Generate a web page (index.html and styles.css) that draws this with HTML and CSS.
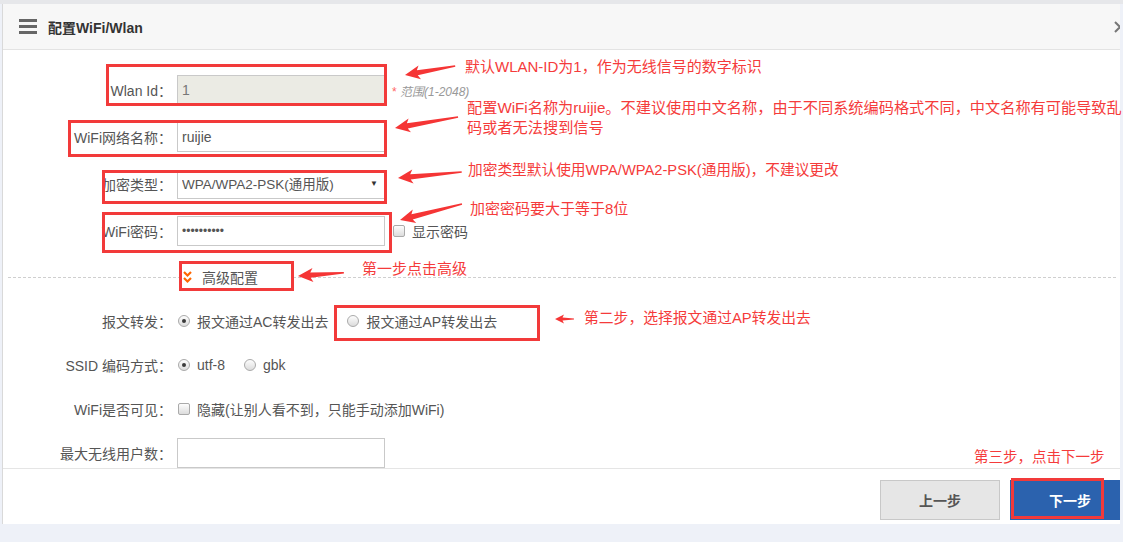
FILE: index.html
```html
<!DOCTYPE html>
<html lang="zh-CN">
<head>
    <meta charset="UTF-8">
    <meta name="viewport" content="width=device-width, initial-scale=1.0">
    <title>配置WiFi/Wlan</title>
    <link rel="stylesheet" href="styles.css">
</head>
<body>

<div class="dialog">
    <div class="dialog-head">
        <svg class="menu-icon" width="18" height="15" viewBox="0 0 18 15">
            <rect x="0" y="0" width="18" height="3" fill="#666"/>
            <rect x="0" y="6" width="18" height="3" fill="#666"/>
            <rect x="0" y="12" width="18" height="3" fill="#666"/>
        </svg>
        <span class="dialog-title">配置WiFi/Wlan</span>
        <svg class="close-icon" width="12" height="12" viewBox="0 0 12 12">
            <path d="M1 1 L11 11 M11 1 L1 11" stroke="#777" stroke-width="2" fill="none"/>
        </svg>
    </div>

    <div class="dialog-body">
        <div class="form-row">
            <label class="form-label">Wlan Id：</label>
            <input class="text-input" type="text" value="1" disabled>
            <span class="hint"><span class="req">*</span> 范围(1-2048)</span>
        </div>

        <div class="form-row">
            <label class="form-label">WiFi网络名称：</label>
            <input class="text-input" type="text" value="ruijie">
        </div>

        <div class="form-row">
            <label class="form-label">加密类型：</label>
            <div class="select-box">
                <select class="select-input">
                    <option>WPA/WPA2-PSK(通用版)</option>
                </select>
            </div>
        </div>

        <div class="form-row row-pwd">
            <label class="form-label">WiFi密码：</label>
            <input class="text-input pwd-input" type="password" value="ruijie1234">
            <span class="check show-pwd"></span>
            <span class="choice-text">显示密码</span>
        </div>

        <div class="adv-row">
            <div class="adv-toggle">
                <svg class="chevrons" width="9" height="13" viewBox="0 0 9 13">
                    <path d="M1 1 L4.5 4.5 L8 1 M1 7 L4.5 10.5 L8 7" stroke="#f60" stroke-width="2.2" fill="none"/>
                </svg>
                <span>高级配置</span>
            </div>
        </div>

        <div class="form-row row-radio">
            <label class="form-label">报文转发：</label>
            <span class="radio on"></span>
            <span class="choice-text">报文通过AC转发出去</span>
            <span class="radio"></span>
            <span class="choice-text">报文通过AP转发出去</span>
        </div>

        <div class="form-row row-radio">
            <label class="form-label">SSID 编码方式：</label>
            <span class="radio on"></span>
            <span class="choice-text">utf-8</span>
            <span class="radio"></span>
            <span class="choice-text">gbk</span>
        </div>

        <div class="form-row row-radio">
            <label class="form-label">WiFi是否可见：</label>
            <span class="check"></span>
            <span class="choice-text">隐藏(让别人看不到，只能手动添加WiFi)</span>
        </div>

        <div class="form-row">
            <label class="form-label">最大无线用户数：</label>
            <input class="text-input" type="text" value="">
        </div>
    </div>

    <div class="dialog-foot">
        <button class="btn btn-prev">上一步</button>
        <button class="btn btn-next">下一步</button>
    </div>
</div>

<!-- annotations drawn over the screenshot -->
<div class="notes">
    <div class="mark" style="left:106px;top:64px;width:281px;height:42px"></div>
    <div class="mark" style="left:68px;top:120px;width:319px;height:37px"></div>
    <div class="mark" style="left:102px;top:170px;width:285px;height:34px"></div>
    <div class="mark" style="left:102px;top:212px;width:290px;height:41px"></div>
    <div class="mark" style="left:179px;top:261px;width:115px;height:30px"></div>
    <div class="mark" style="left:334px;top:305px;width:206px;height:36px"></div>
    <div class="mark" style="left:1011px;top:478px;width:93px;height:41px"></div>

    <svg class="arrows" width="1123" height="542" viewBox="0 0 1123 542">
        <polygon transform="translate(405 75) rotate(-10.2)" points="0,0 15,-7 12.5,-2.6 51,-0.8 51,0.8 12.5,2.6 15,7"/>
        <polygon transform="translate(395 128) rotate(-9.9)" points="0,0 15,-7 12.5,-2.6 64,-0.8 64,0.8 12.5,2.6 15,7"/>
        <polygon transform="translate(398 178) rotate(-5.4)" points="0,0 15,-7 12.5,-2.6 64,-0.8 64,0.8 12.5,2.6 15,7"/>
        <polygon transform="translate(400 220) rotate(-14.5)" points="0,0 15,-7 12.5,-2.6 64,-0.8 64,0.8 12.5,2.6 15,7"/>
        <polygon transform="translate(298 276) rotate(-4)" points="0,0 15,-7 12.5,-2.6 46,-0.8 46,0.8 12.5,2.6 15,7"/>
        <polygon transform="translate(555 319)" points="0,0 9,-4.5 7.5,-1.5 19,-0.6 19,0.6 7.5,1.5 9,4.5"/>
    </svg>

    <div class="note note-1">默认WLAN-ID为1，作为无线信号的数字标识</div>
    <div class="note note-2">配置WiFi名称为ruijie。不建议使用中文名称，由于不同系统编码格式不同，中文名称有可能导致乱<br>码或者无法搜到信号</div>
    <div class="note note-3">加密类型默认使用WPA/WPA2-PSK(通用版)，不建议更改</div>
    <div class="note note-4">加密密码要大于等于8位</div>
    <div class="note note-5">第一步点击高级</div>
    <div class="note note-6">第二步，选择报文通过AP转发出去</div>
    <div class="note note-7">第三步，点击下一步</div>
</div>

</body>
</html>
```

FILE: styles.css
```css
body {
    font-family: 'Liberation Sans', 'Noto Sans CJK SC', sans-serif;
    font-size: 14px;
    color: #555;
    background-color: #eef1f8;
    margin: 0;
    padding: 0 0 0 2px;
    border-top: 4px solid #e6e7ea;
    height: 538px;
    overflow: hidden;
    position: relative;
}

/* Dialog frame */
.dialog {
    width: 1117px;
    height: 520px;
    background-color: #fff;
    border-left: 1px solid #d9d9d9;
    display: flex;
    flex-direction: column;
    overflow: hidden;
}

.dialog-head {
    flex: none;
    height: 45px;
    background-color: #f7f7f7;
    border-bottom: 1px solid #e3e3e3;
    display: flex;
    align-items: center;
    padding-left: 16px;
}

.menu-icon {
    flex: none;
    margin-right: 11px;
}

.dialog-title {
    font-weight: bold;
    color: #333;
    font-size: 14px;
}

.close-icon {
    flex: none;
    margin-left: auto;
    margin-right: -6px;
}

/* Scrolling form area */
.dialog-body {
    flex: none;
    height: 418px;
    box-sizing: border-box;
    padding: 25px 0 133px;
    overflow-y: scroll;
}

.dialog-body::-webkit-scrollbar {
    width: 6px;
}

.dialog-body::-webkit-scrollbar-track {
    background-color: #f2f2f2;
}

.dialog-body::-webkit-scrollbar-thumb {
    background-color: #c6c6c6;
}

.dialog-body::-webkit-scrollbar-button:vertical:start:decrement,
.dialog-body::-webkit-scrollbar-button:vertical:end:increment {
    display: block;
    height: 9px;
    background-color: #f2f2f2;
}

.form-row {
    height: 30px;
    display: flex;
    align-items: center;
    margin-bottom: 17px;
}

.row-pwd {
    margin-bottom: 16px;
}

.row-radio {
    margin-bottom: 14px;
}

.form-label {
    flex: none;
    width: 169px;
    margin-right: 5px;
    text-align: right;
    white-space: nowrap;
}

.text-input {
    flex: none;
    width: 208px;
    height: 30px;
    box-sizing: border-box;
    border: 1px solid #c9c9c9;
    padding: 0 4px;
    font-family: inherit;
    font-size: 14px;
    color: #555;
    background-color: #fff;
    outline: none;
}

.text-input:disabled {
    background-color: #ebebe4;
    color: #777;
}

.pwd-input {
    font-size: 12px;
    letter-spacing: 0;
}

.hint {
    margin-left: 7px;
    font-size: 12px;
    font-style: italic;
    color: #999;
    white-space: nowrap;
}

.hint .req {
    color: #f66;
    font-style: normal;
}

.select-box {
    position: relative;
    flex: none;
    width: 208px;
    height: 29px;
}

.select-input {
    appearance: none;
    -webkit-appearance: none;
    width: 100%;
    height: 100%;
    border: 1px solid #c9c9c9;
    border-radius: 0;
    padding: 0 4px;
    font-family: inherit;
    font-size: 13.5px;
    color: #555;
    background-color: #fff;
    outline: none;
}

.select-box::after {
    content: '▼';
    position: absolute;
    right: 7px;
    top: 9px;
    font-size: 8px;
    color: #333;
}

/* Radios and checkboxes */
.radio, .check {
    flex: none;
    width: 12px;
    height: 12px;
    box-sizing: border-box;
    border: 1px solid #aaa;
    background: linear-gradient(#fdfdfd, #dcdcdc);
    margin-left: 1px;
    margin-right: 7px;
    position: relative;
}

.radio {
    border-radius: 50%;
}

.check {
    border-radius: 2px;
}

.radio.on::after {
    content: '';
    position: absolute;
    left: 3px;
    top: 3px;
    width: 4px;
    height: 4px;
    border-radius: 50%;
    background-color: #3a3a3a;
}

.choice-text {
    margin-right: 18px;
    white-space: nowrap;
}

.show-pwd {
    margin-left: 8px;
}

/* Advanced toggle with dashed rule */
.adv-row {
    position: relative;
    height: 30px;
    display: flex;
    align-items: center;
    padding-left: 177px;
    margin-bottom: 14px;
}

.adv-row::before {
    content: '';
    position: absolute;
    left: 5px;
    right: 4px;
    top: 15px;
    border-top: 1px dashed #cfcfcf;
}

.adv-toggle {
    position: relative;
    display: flex;
    align-items: center;
    background-color: #fff;
    padding: 0 34px 0 3px;
    height: 28px;
}

.chevrons {
    margin-right: 10px;
}

/* Footer */
.dialog-foot {
    flex: none;
    height: 55px;
    border-top: 1px solid #e5e5e5;
    display: flex;
    justify-content: flex-end;
    align-items: flex-start;
    padding-top: 11px;
    box-sizing: border-box;
}

.btn {
    width: 120px;
    height: 40px;
    font-family: inherit;
    font-size: 14px;
    font-weight: bold;
    border: 1px solid;
    cursor: pointer;
}

.btn-prev {
    background-color: #e6e6e6;
    border-color: #c8c8c8;
    color: #555;
    margin-right: 10px;
}

.btn-next {
    background-color: #2b62ae;
    border-color: #2b62ae;
    color: #fff;
    margin-right: -10px;
}

/* Screenshot annotations */
.notes {
    position: absolute;
    left: 0;
    top: -4px;
    width: 1123px;
    height: 542px;
    pointer-events: none;
}

.mark {
    position: absolute;
    box-sizing: border-box;
    border: 3px solid #f23a3a;
}

.arrows {
    position: absolute;
    left: 0;
    top: 0;
}

.arrows polygon {
    fill: #f53535;
}

.note {
    position: absolute;
    color: #f53b3b;
    font-size: 15px;
    line-height: 20px;
    white-space: nowrap;
}

.note-1 { left: 465px; top: 57px; }
.note-2 { left: 467px; top: 98px; font-size: 15.2px; }
.note-3 { left: 468px; top: 160px; font-size: 14.7px; }
.note-4 { left: 470px; top: 199px; }
.note-5 { left: 362px; top: 259px; }
.note-6 { left: 584px; top: 308px; font-size: 14.8px; }
.note-7 { left: 974px; top: 447px; font-size: 14.5px; }
```
